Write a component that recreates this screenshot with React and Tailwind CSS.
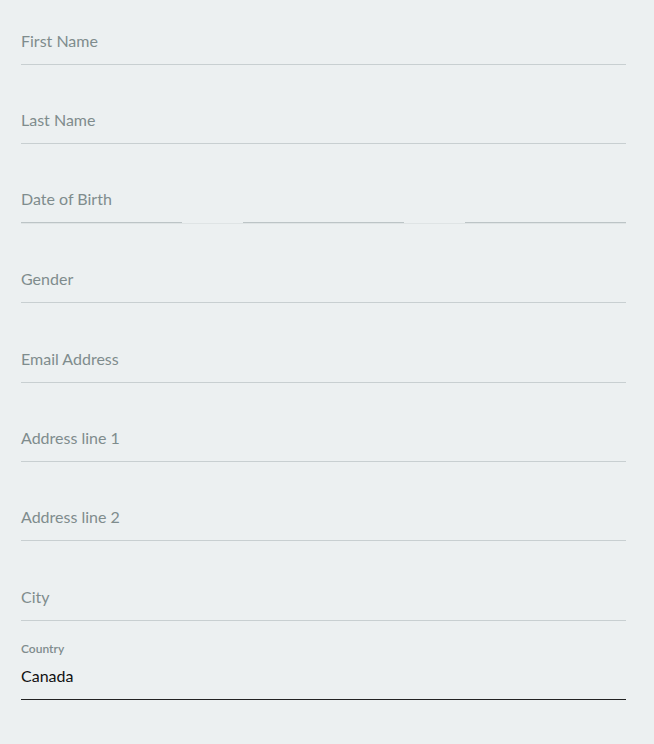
import React from 'react';

const fields = [
  { label: 'First Name', mt: 'mt-0' },
  { label: 'Last Name', mt: 'mt-[45px]' },
];

const rest = [
  { label: 'Gender', mt: 'mt-[46px]' },
  { label: 'Email Address', mt: 'mt-[46px]' },
  { label: 'Address line 1', mt: 'mt-[45px]' },
  { label: 'Address line 2', mt: 'mt-[45px]' },
  { label: 'City', mt: 'mt-[46px]' },
];

function Field({ label, mt }) {
  return (
    <div className={`${mt} border-b border-[#c8cfd1] pb-[13px]`}>
      <div className="text-[16px] leading-5 text-[#7f8c8d]">{label}</div>
    </div>
  );
}

export default function App() {
  return (
    <div className="min-h-[744px] bg-[#ecf0f1] px-[21px] pt-[31px] pr-[28px] font-['Lato','Open_Sans',sans-serif]">
      {fields.map((f) => (
        <Field key={f.label} {...f} />
      ))}

      <div className="mt-[45px]">
        <div className="pb-[13px] text-[16px] leading-5 text-[#7f8c8d]">Date of Birth</div>
        <div className="relative flex h-px justify-between">
          <div className="absolute inset-x-0 top-[1px] h-px bg-[#dfe4e5]" />
          <div className="relative w-[161px] h-px bg-[#bcc4c6]" />
          <div className="relative w-[161px] h-px bg-[#bcc4c6]" />
          <div className="relative w-[161px] h-px bg-[#bcc4c6]" />
        </div>
      </div>

      {rest.map((f) => (
        <Field key={f.label} {...f} />
      ))}

      <div className="mt-[20px] border-b border-[#222] pb-[13px]">
        <div className="text-[12px] leading-4 font-semibold text-[#7f8c8d]">Country</div>
        <div className="mt-[9px] text-[16px] leading-5 text-[#111]">Canada</div>
      </div>
    </div>
  );
}
